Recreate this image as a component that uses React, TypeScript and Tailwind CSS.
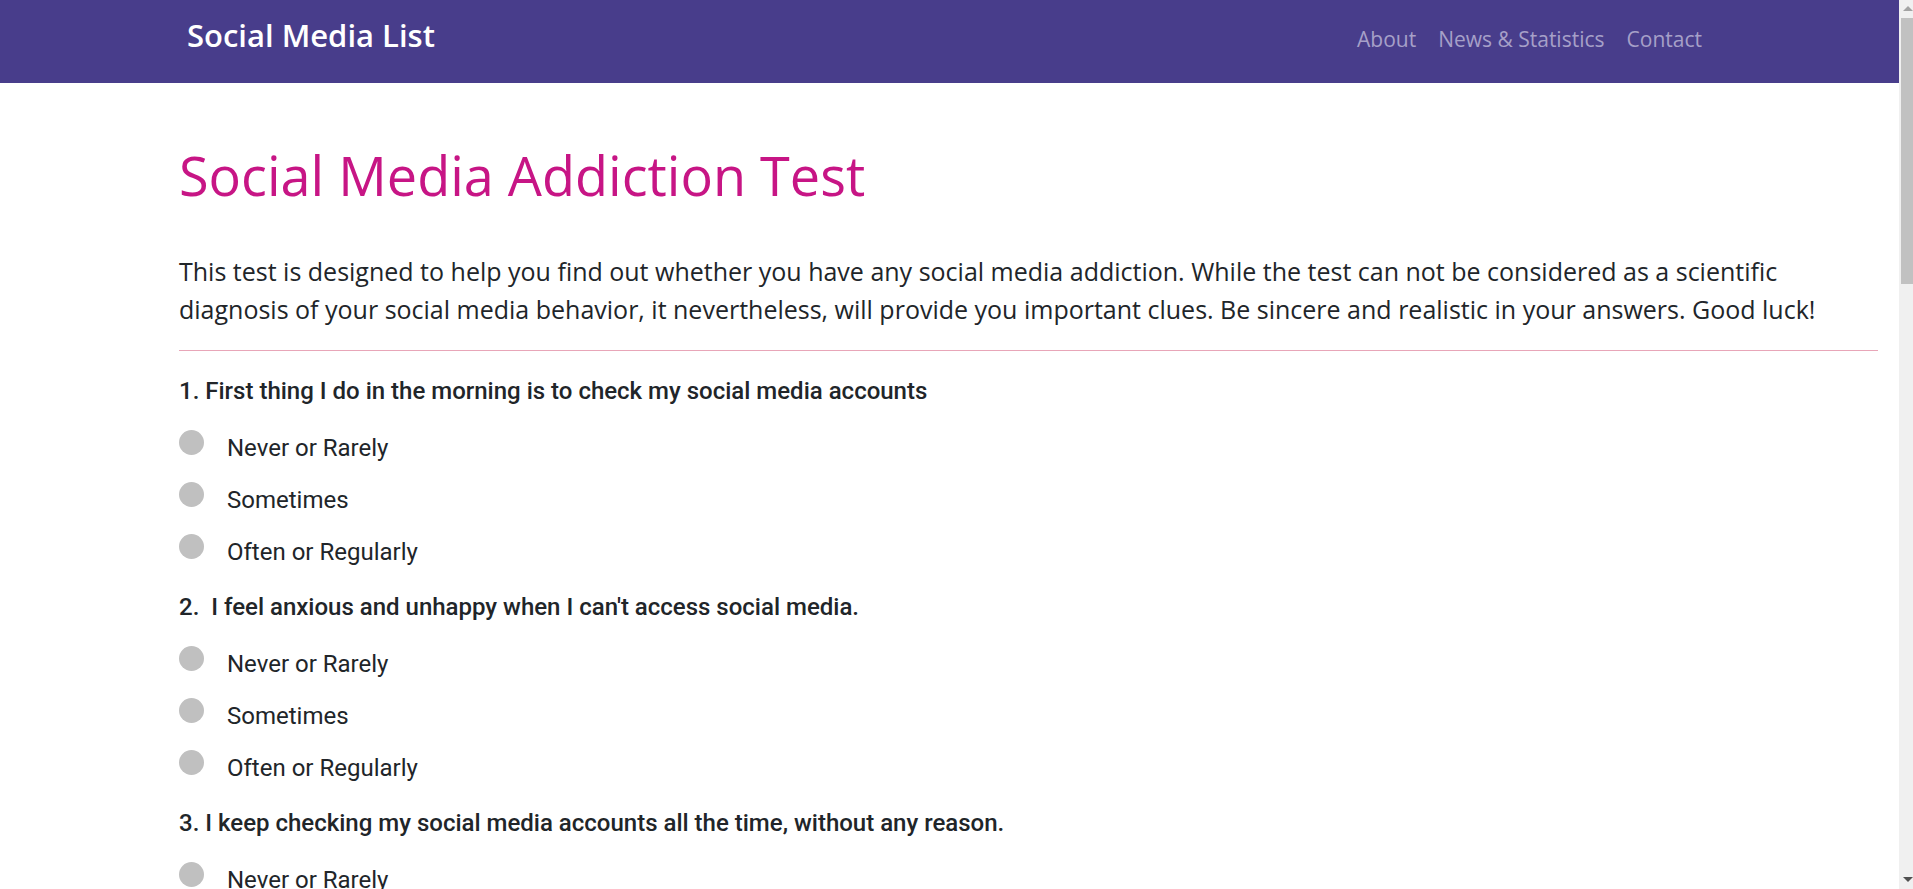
import React from "react";

const questions = [
  { text: "1. First thing I do in the morning is to check my social media accounts" },
  { text: "2.\u00a0 I feel anxious and unhappy when I can't access social media." },
  { text: "3. I keep checking my social media accounts all the time, without any reason." },
  { text: "4. I spend more time on social media than I planned to." },
];

const options = ["Never or Rarely", "Sometimes", "Often or Regularly"];

const QuestionBlock: React.FC<{ text: string; index: number }> = ({ text, index }) => {
  return (
    <div className="pb-[10px]">
      <p className="text-[24px] leading-[30px] font-medium text-[#212529]">{text}</p>
      <div className="mt-[20px]">
        {options.map((opt) => (
          <label key={opt} className="flex items-start h-[52px] cursor-pointer">
            <span className="mt-[4px] w-[25px] h-[25px] rounded-full bg-[#c0c0c0] shrink-0" />
            <input type="radio" name={`q${index}`} className="hidden" />
            <span className="ml-[23px] mt-[7px] text-[24px] leading-[30px] text-[#212529]">{opt}</span>
          </label>
        ))}
      </div>
    </div>
  );
};

const Scrollbar: React.FC = () => {
  return (
    <div className="w-[14px] h-full bg-[#f0f0f0] flex flex-col shrink-0">
      <div className="h-[18px] flex items-center justify-end">
        <svg width="12" height="8" viewBox="0 0 12 8">
          <path d="M2 6 L7 1 L12 6 Z" fill="#a3a3a3" />
        </svg>
      </div>
      <div className="ml-[2px] h-[266px] bg-[#c1c1c1]" />
      <div className="flex-1" />
      <div className="h-[14px] flex items-start justify-end">
        <svg width="12" height="8" viewBox="0 0 12 8">
          <path d="M2 2 L7 7 L12 2 Z" fill="#505050" />
        </svg>
      </div>
    </div>
  );
};

export default function App() {
  const segoe = { fontFamily: '"Segoe UI", "Open Sans", sans-serif' };
  return (
    <div className="flex h-[889px] w-full overflow-hidden bg-white">
      <div className="flex-1 min-w-0">
        <nav
          className="h-[83px] bg-[#483d8b] flex items-start justify-between pl-[187px] pr-[197px]"
          style={segoe}
        >
          <a href="#" className="pt-[15px] text-[31px] leading-[40px] font-semibold text-white">
            Social Media List
          </a>
          <ul className="flex gap-[22px] pt-[24px] text-[21px] leading-[30px] text-[#a6a0c8]">
            <li><a href="#">About</a></li>
            <li><a href="#">News &amp; Statistics</a></li>
            <li><a href="#">Contact</a></li>
          </ul>
        </nav>
        <main className="pl-[179px] pr-[21px] pt-[61px]">
          <h1 className="text-[54px] leading-[62px] text-[#c71585]" style={segoe}>
            Social Media Addiction Test
          </h1>
          <p className="mt-[46px] max-w-[1665px] text-[25px] leading-[38px] text-[#212529]" style={segoe}>
            This test is designed to help you find out whether you have any social media addiction.
            While the test can not be considered as a scientific diagnosis of your social media
            behavior, it nevertheless, will provide you important clues. Be sincere and realistic in
            your answers. Good luck!
          </p>
          <hr className="mt-[22px] border-0 border-t border-[#e8a6b8]" />
          <div className="mt-[25px]" style={{ fontFamily: "Roboto, sans-serif" }}>
            {questions.map((q, i) => (
              <QuestionBlock key={i} text={q.text} index={i} />
            ))}
          </div>
        </main>
      </div>
      <Scrollbar />
    </div>
  );
}
